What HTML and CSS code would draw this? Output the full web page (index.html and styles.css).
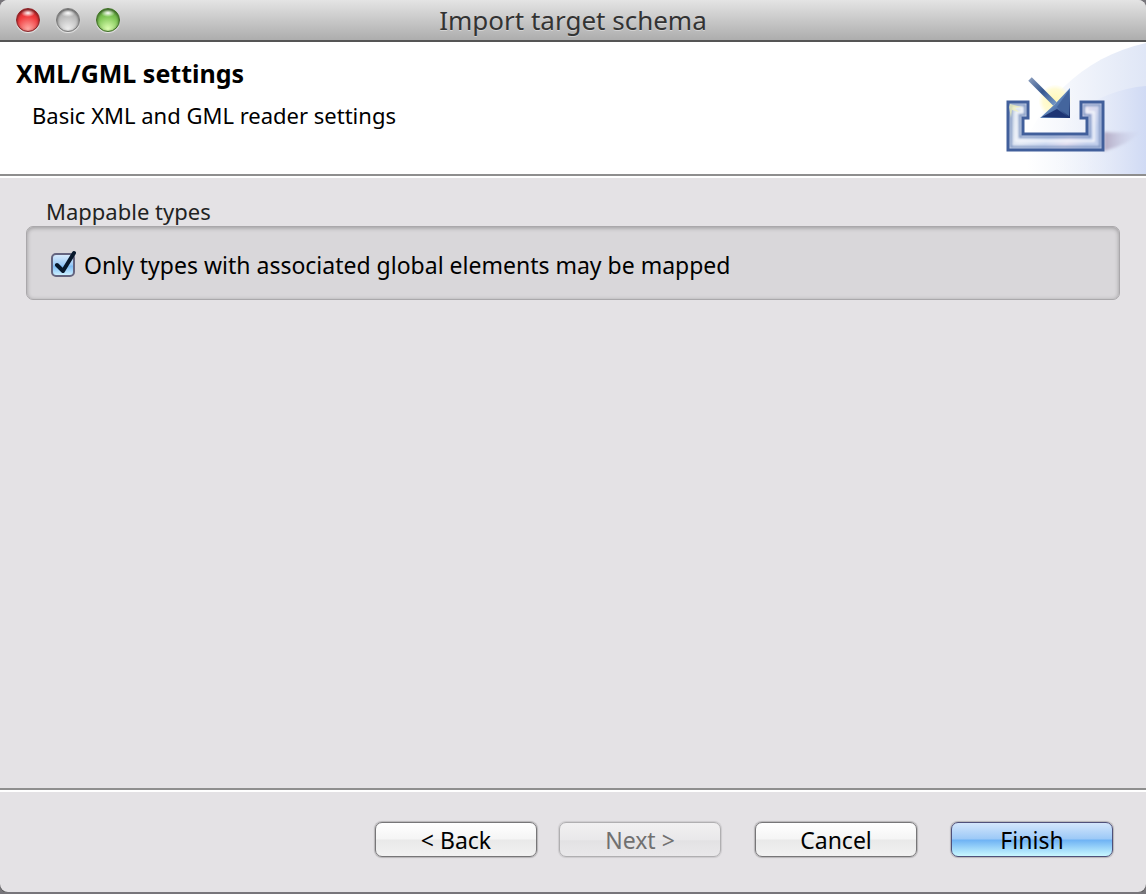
FILE: index.html
```html
<!DOCTYPE html>
<html lang="en">
<head>
<meta charset="utf-8">
<title>Import target schema</title>
<link rel="stylesheet" href="styles.css">
</head>
<body>
<div class="window">
  <header class="titlebar">
    <div class="lights">
      <button class="light red" type="button" aria-label="Close"></button>
      <button class="light gray" type="button" aria-label="Minimize" disabled></button>
      <button class="light green" type="button" aria-label="Zoom"></button>
    </div>
    <div class="title">Import target schema</div>
  </header>
  <section class="banner">
    <div class="banner-text">
      <h1>XML/GML settings</h1>
      <p>Basic XML and GML reader settings</p>
    </div>
    <svg class="banner-art" viewBox="0 0 150 132" aria-hidden="true">
      <defs>
        <linearGradient id="arcA" x1="0" x2="1"><stop offset="0.1" stop-color="#fff"/><stop offset="1" stop-color="#dfe6f6"/></linearGradient>
        <linearGradient id="arcB" x1="0" x2="1"><stop offset="0" stop-color="#fff" stop-opacity="0"/><stop offset="1" stop-color="#d0daf4"/></linearGradient>
        <linearGradient id="tray" x1="0" x2="1" y2="0.3"><stop offset="0" stop-color="#c2cfe2"/><stop offset=".35" stop-color="#e3e9f4"/><stop offset=".6" stop-color="#ccd8f0"/><stop offset=".8" stop-color="#e3dff0"/><stop offset="1" stop-color="#c2cfec"/></linearGradient>
        <linearGradient id="shadow" x1="0" x2="1"><stop offset="0" stop-color="#b3aac4"/><stop offset="1" stop-color="#cdd5ee" stop-opacity="0"/></linearGradient>
        <linearGradient id="stem" x1="0" x2="1" y2="1"><stop offset="0" stop-color="#8397b9"/><stop offset=".5" stop-color="#36578f"/><stop offset="1" stop-color="#7195c5"/></linearGradient>
        <linearGradient id="head" x1="0" x2="1" y2="1"><stop offset="0" stop-color="#a4c6e5"/><stop offset=".5" stop-color="#6288bd"/><stop offset="1" stop-color="#182e6b"/></linearGradient>
        <radialGradient id="glow"><stop offset="0" stop-color="#fff8b8"/><stop offset=".75" stop-color="#fffbd4"/><stop offset="1" stop-color="#fffce0" stop-opacity=".2"/></radialGradient>
        <filter id="soft"><feGaussianBlur stdDeviation="1.5"/></filter>
        <filter id="bevel"><feGaussianBlur stdDeviation="0.8"/></filter>
      </defs>
      <path d="M18 132C34 67 84 15 150 1V132Z" fill="url(#arcA)"/>
      <path d="M40 132C54 83 98 48 150 44V132Z" fill="url(#arcB)"/>
      <path d="M108 90C123 91 136 91 148 88Q132 103 108 109Z" fill="url(#shadow)" filter="url(#soft)"/>
      <circle cx="59" cy="59" r="16" fill="url(#glow)"/>
      <path d="M12 60H32V76H27V92H91V76H85V60H107V108H12Z" fill="url(#tray)"/>
      <path d="M15 63H29V73H24V95H94V73H88V63H104V105H15Z" fill="none" stroke="#7f96c2" stroke-width="2" filter="url(#bevel)"/>
      <path d="M17 66H26V70H20V99H98V70H91V66" fill="none" stroke="#f4f7fc" stroke-width="2" filter="url(#bevel)"/>
      <path d="M12 60H32V76H27V92H91V76H85V60H107V108H12Z" transform="translate(0 0)" fill="none" stroke="#415f9b" stroke-width="3"/>
      <path d="M14 62l12 3-7 1 4 4-7-2-1 8-2-11z" fill="#f5f5b7" opacity=".7"/>
      <path d="M34 37L59 62" fill="none" stroke="url(#stem)" stroke-width="5"/>
      <path d="M74 46V76H44L58 63Z" fill="url(#head)"/>
      <path d="M46 75L61 67L72 75Z" fill="#1d3473"/>
      <path d="M73 48V74L61 65Z" fill="#44659d"/>
    </svg>
  </section>
  <main class="content">
    <fieldset class="group">
      <legend>Mappable types</legend>
      <div class="group-box">
        <label class="check">
          <span class="check-mark">
            <input type="checkbox" checked>
            <svg viewBox="0 0 28 30" aria-hidden="true"><path d="M6 16L12 22L23 4" fill="none" stroke="#07182c" stroke-width="4" stroke-linecap="round" stroke-linejoin="round"/></svg>
          </span>
          <span>Only types with associated global elements may be mapped</span>
        </label>
      </div>
    </fieldset>
  </main>
  <footer class="actions">
    <div class="pair">
      <button class="btn" type="button">&lt; Back</button>
      <button class="btn" type="button" disabled>Next &gt;</button>
    </div>
    <button class="btn" type="button">Cancel</button>
    <button class="btn primary" type="submit">Finish</button>
  </footer>
</div>
</body>
</html>
```

FILE: styles.css
```css
* { box-sizing: border-box; }

body {
  margin: 0;
  background: #77757a;
  color: #000;
  font: 22px/30px "Noto Sans", "Open Sans", sans-serif;
}

.window {
  display: flex;
  flex-direction: column;
  height: calc(100vh - 2px);
  background: #e4e2e5;
  border-radius: 8px;
  box-shadow: 0 1px 0 #555;
  overflow: hidden;
}

.titlebar {
  display: grid;
  grid-template-columns: 1fr auto 1fr;
  align-items: center;
  height: 42px;
  padding: 0 16px;
  background: linear-gradient(#e4e4e4, #adadad);
  border-bottom: 2px solid #555;
}

.lights { display: flex; gap: 16px; }

.light {
  width: 24px;
  height: 24px;
  padding: 0;
  border: 1px solid;
  border-radius: 50%;
  box-shadow: inset 0 1px 3px rgba(0, 0, 0, .6), 0 1px 1px rgba(255, 255, 255, .7);
}

.red {
  border-color: #8a2226;
  background: radial-gradient(ellipse 7px 4px at 50% 18%, #fff, transparent), radial-gradient(circle at 50% 90%, #ffaaa4, #f13b3e 55%, #cf2429);
}

.gray {
  border-color: #777;
  background: radial-gradient(ellipse 7px 4px at 50% 18%, #fff, transparent), radial-gradient(circle at 50% 90%, #eee, #bdbdbd 55%, #aaa);
}

.green {
  border-color: #3c6e22;
  background: radial-gradient(ellipse 7px 4px at 50% 18%, #fff, transparent), radial-gradient(circle at 50% 90%, #ddffb2, #7fc655 55%, #59a338);
}

.title {
  color: #333;
  font-size: 26px;
  text-shadow: 0 1px 0 rgba(255, 255, 255, .4);
}

.banner {
  display: flex;
  justify-content: space-between;
  background: #fff;
  border-bottom: 2px solid #8e8e8e;
}

.banner-text { padding: 16px; }

h1 {
  margin: 0;
  font-size: 25px;
  line-height: 30px;
}

p { margin: 12px 16px 0; }

.banner-art {
  flex: none;
  width: 150px;
  height: 132px;
}

.content {
  flex: 1;
  padding: 19px 26px;
  border-top: 2px solid #fff;
}

.group {
  min-width: 0;
  margin: 0;
  padding: 0;
  border: 0;
}

legend {
  padding: 0 20px 1px;
  color: #222;
  line-height: 28px;
}

.group-box {
  padding: 23px 24px 19px;
  background: #d9d7da;
  border: 1px solid #aaa8ab;
  border-radius: 7px;
  box-shadow: inset 0 1px 4px rgba(0, 0, 0, .3);
}

.check {
  display: flex;
  align-items: center;
  gap: 9px;
  font-size: 23px;
  line-height: 30px;
}

.check-mark {
  position: relative;
  width: 24px;
  height: 24px;
}

.check-mark input {
  appearance: none;
  display: block;
  width: 24px;
  height: 24px;
  margin: 0;
  border: 2px solid #64647f;
  border-radius: 5px;
  background: linear-gradient(#d6e9fb, #9bcaf7 50%, #7cbbf5 55%, #cbefff);
}

.check-mark svg {
  position: absolute;
  left: 0;
  top: -4px;
  width: 28px;
  height: 30px;
  pointer-events: none;
}

.actions {
  display: flex;
  justify-content: flex-end;
  gap: 34px;
  padding: 30px 33px 35px;
  border-top: 2px solid #fff;
  box-shadow: 0 -2px 0 #8e8e8e;
}

.pair { display: flex; gap: 22px; }

.btn {
  width: 162px;
  height: 35px;
  padding: 0;
  border: 1px solid #777678;
  border-radius: 7px;
  background: linear-gradient(#fff, #f5f5f5 48%, #e9e9e9 52%, #f2f2f2);
  box-shadow: 0 0 1px 1px rgba(0, 0, 0, .2);
  color: #000;
  font: inherit;
  font-size: 23px;
  line-height: 30px;
}

.btn:disabled {
  border-color: #b0afb1;
  background: linear-gradient(#f1f0f1, #e9e8ea 50%, #e3e2e4 54%, #e9e8ea);
  box-shadow: 0 0 1px 1px rgba(0, 0, 0, .1);
  color: #707070;
}

.primary {
  border-color: #4f507a;
  background: linear-gradient(#d4e6fb, #9cc9f7 48%, #6fb3f4 52%, #c9f8ff);
}
```
